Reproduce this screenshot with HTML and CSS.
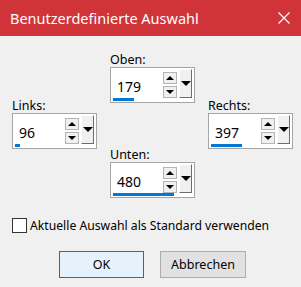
FILE: index.html
```html
<!DOCTYPE html>
<html lang="de">
<head>
    <meta charset="UTF-8">
    <title>Benutzerdefinierte Auswahl</title>
    <link rel="stylesheet" href="styles.css">
</head>
<body>
    <div class="dialog">
        <div class="title-bar">
            <span class="title">Benutzerdefinierte Auswahl</span>
            <svg class="close" width="12" height="12" viewBox="0 0 12 12">
                <path d="M0.5 0.5 L11.5 11.5 M11.5 0.5 L0.5 11.5" stroke="#fff" stroke-width="1.2" fill="none"/>
            </svg>
        </div>

        <div class="spin-area">
            <div class="col col-side">
                <div class="group">
                    <div class="label">Links:</div>
                    <div class="field">
                        <div class="field-row">
                            <div class="value">96</div>
                            <div class="spin">
                                <div class="spin-btn"><span class="tri-up"></span></div>
                                <div class="spin-btn"><span class="tri-down"></span></div>
                            </div>
                            <div class="drop"><span class="tri-drop"></span></div>
                        </div>
                        <div class="bar" style="width: 5px"></div>
                    </div>
                </div>
            </div>

            <div class="col col-mid">
                <div class="group">
                    <div class="label">Oben:</div>
                    <div class="field">
                        <div class="field-row">
                            <div class="value">179</div>
                            <div class="spin">
                                <div class="spin-btn"><span class="tri-up"></span></div>
                                <div class="spin-btn"><span class="tri-down"></span></div>
                            </div>
                            <div class="drop"><span class="tri-drop"></span></div>
                        </div>
                        <div class="bar" style="width: 21px"></div>
                    </div>
                </div>
                <div class="group group-bottom">
                    <div class="label">Unten:</div>
                    <div class="field">
                        <div class="field-row">
                            <div class="value">480</div>
                            <div class="spin">
                                <div class="spin-btn"><span class="tri-up"></span></div>
                                <div class="spin-btn"><span class="tri-down"></span></div>
                            </div>
                            <div class="drop"><span class="tri-drop"></span></div>
                        </div>
                        <div class="bar" style="width: 61px"></div>
                    </div>
                </div>
            </div>

            <div class="col col-side">
                <div class="group">
                    <div class="label">Rechts:</div>
                    <div class="field">
                        <div class="field-row">
                            <div class="value">397</div>
                            <div class="spin">
                                <div class="spin-btn"><span class="tri-up"></span></div>
                                <div class="spin-btn"><span class="tri-down"></span></div>
                            </div>
                            <div class="drop"><span class="tri-drop"></span></div>
                        </div>
                        <div class="bar" style="width: 31px"></div>
                    </div>
                </div>
            </div>
        </div>

        <label class="check-row">
            <span class="checkbox"></span>
            <span>Aktuelle Auswahl als Standard verwenden</span>
        </label>

        <div class="buttons">
            <button class="btn btn-default">OK</button>
            <button class="btn">Abbrechen</button>
        </div>
    </div>
</body>
</html>
```

FILE: styles.css
```css
body {
    margin: 0;
    background: #f0f0f0;
    font-family: "Noto Sans", "Open Sans", sans-serif;
    color: #000;
}
.dialog {
    width: 301px;
    height: 287px;
    background: #f0f0f0;
}
.title-bar {
    height: 36px;
    background: #d13438;
    display: flex;
    align-items: center;
    justify-content: space-between;
    padding: 0 11px 0 10px;
    box-sizing: border-box;
}
.title {
    color: #fff;
    font-size: 14.5px;
    line-height: 36px;
}
.close {
    display: block;
    margin-top: -1px;
}
.spin-area {
    display: grid;
    grid-template-columns: 85px 85px 85px;
    column-gap: 13px;
    padding-left: 12px;
    height: 162px;
}
.col {
    display: flex;
    flex-direction: column;
}
.col-side {
    padding-top: 62px;
}
.col-mid {
    padding-top: 16px;
}
.group-bottom {
    margin-top: 44px;
}
.label {
    font-size: 12.5px;
    line-height: 15px;
}
.field {
    width: 85px;
    height: 36px;
    box-sizing: border-box;
    border: 1px solid #a5a5a5;
    background: #fff;
    padding: 1px 2px 0 1px;
    display: flex;
    flex-direction: column;
}
.field-row {
    display: flex;
    height: 29px;
}
.value {
    flex: 1;
    font-size: 14px;
    padding: 8px 0 0 5px;
}
.spin {
    width: 14px;
    display: flex;
    flex-direction: column;
    gap: 2px;
    padding-top: 3px;
    margin-right: 2px;
}
.spin-btn {
    height: 12px;
    box-sizing: border-box;
    border: 1px solid #b4b4b4;
    background: #f0f0f0;
    display: flex;
    align-items: center;
    justify-content: center;
}
.tri-up {
    width: 0;
    height: 0;
    border-left: 4px solid transparent;
    border-right: 4px solid transparent;
    border-bottom: 4px solid #000;
}
.tri-down {
    width: 0;
    height: 0;
    border-left: 4px solid transparent;
    border-right: 4px solid transparent;
    border-top: 4px solid #000;
}
.drop {
    width: 13px;
    height: 29px;
    box-sizing: border-box;
    background: #f0f0f0;
    border-top: 1px solid #fff;
    border-left: 1px solid #fff;
    border-right: 1px solid #6d6d6d;
    border-bottom: 1px solid #6d6d6d;
    display: flex;
    align-items: center;
    justify-content: center;
}
.tri-drop {
    width: 0;
    height: 0;
    border-left: 5px solid transparent;
    border-right: 5px solid transparent;
    border-top: 5px solid #000;
}
.bar {
    height: 3px;
    margin-left: 1px;
    background: #0078d7;
}
.check-row {
    display: flex;
    align-items: center;
    gap: 3px;
    padding-left: 12px;
    margin-top: 20px;
    font-size: 12.2px;
    height: 15px;
}
.checkbox {
    width: 15px;
    height: 15px;
    box-sizing: border-box;
    border: 1px solid #333;
    background: #fff;
}
.buttons {
    display: flex;
    gap: 16px;
    padding-left: 59px;
    margin-top: 18px;
}
.btn {
    width: 86px;
    height: 27px;
    font-family: "Noto Sans", "Open Sans", sans-serif;
    font-size: 12.5px;
    color: #000;
    background: #e1e1e1;
    border: 1px solid #adadad;
    padding: 0;
}
.btn-default {
    width: 85px;
    background: #e5f1fb;
    border-color: #0078d7;
}
```
